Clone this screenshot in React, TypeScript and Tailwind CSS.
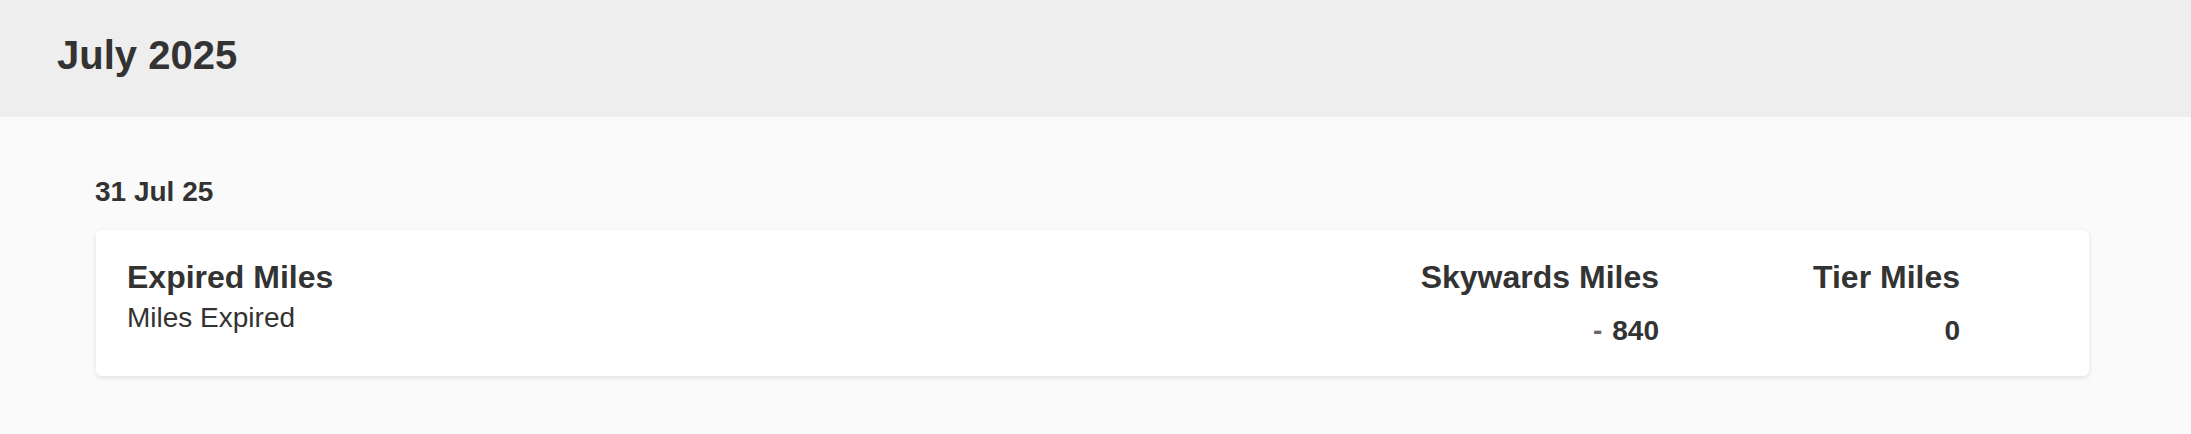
import React from 'react';

const font = { fontFamily: '"Liberation Sans", Arial, Helvetica, sans-serif' };

const App: React.FC = () => {
  return (
    <div className="min-h-[434px] bg-[#fafafa] text-[#333333]" style={font}>
      {/* Month header */}
      <div className="h-[117px] bg-[#eeeeee] pl-[57px] pt-[32px]">
        <h2 className="text-[40px] leading-[46px] font-bold">July 2025</h2>
      </div>

      <div className="pl-[95px] pr-[102px] pt-[59px]">
        <div className="text-[28px] leading-[32px] font-bold">31 Jul 25</div>

        {/* Transaction card */}
        <div className="mt-[22px] ml-px flex rounded-[6px] bg-white pl-[31px] pr-[129px] pt-[29px] pb-[29px] shadow-[0_2px_5px_rgba(0,0,0,0.1)]">
          <div className="flex-1">
            <div className="text-[32px] leading-[37px] font-bold">Expired Miles</div>
            <div className="mt-[6px] text-[28px] leading-[32px] font-normal">Miles Expired</div>
          </div>

          <div className="pr-px text-right">
            <div className="text-[32px] leading-[37px] font-bold">Skywards Miles</div>
            <div className="mt-[19px] text-[28px] leading-[32px] font-bold">
              <span className="text-[#666666] mr-[10px]">-</span>840
            </div>
          </div>

          <div className="w-[300px] text-right">
            <div className="text-[32px] leading-[37px] font-bold">Tier Miles</div>
            <div className="mt-[19px] text-[28px] leading-[32px] font-bold">0</div>
          </div>
        </div>
      </div>
    </div>
  );
};

export default App;
